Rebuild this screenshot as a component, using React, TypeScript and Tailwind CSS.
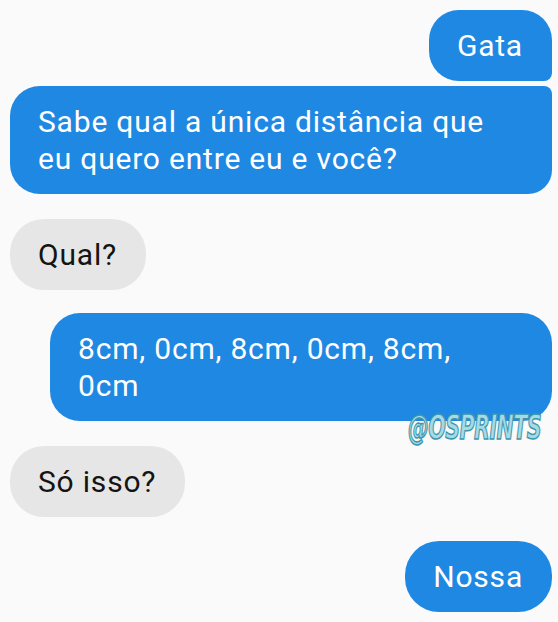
import React from 'react';

type Msg = {
    lines: string[];
    mine: boolean;
    shape: string;
    width?: string;
    gap: string;
};

const messages: Msg[] = [
    { lines: ['Gata'], mine: true, shape: 'rounded-[30px] rounded-br-[8px]', gap: 'mt-0' },
    { lines: ['Sabe qual a única distância que', 'eu quero entre eu e você?'], mine: true, shape: 'rounded-[30px] rounded-tr-[8px] rounded-br-[24px]', width: 'w-[542px]', gap: 'mt-[5px]' },
    { lines: ['Qual?'], mine: false, shape: 'rounded-[34px]', gap: 'mt-[25px]' },
    { lines: ['8cm, 0cm, 8cm, 0cm, 8cm,', '0cm'], mine: true, shape: 'rounded-[30px]', width: 'w-[502px]', gap: 'mt-[23px]' },
    { lines: ['Só isso?'], mine: false, shape: 'rounded-[34px]', gap: 'mt-[25px]' },
    { lines: ['Nossa'], mine: true, shape: 'rounded-[34px]', gap: 'mt-[24px]' },
];

function Bubble({ msg }: { msg: Msg }) {
    const colors = msg.mine ? 'bg-[#1f88e2] text-white' : 'bg-[#e6e6e6] text-[#141414]';
    return (
        <div className={`flex ${msg.mine ? 'justify-end' : 'justify-start'} ${msg.gap}`}>
            <div className={`${colors} ${msg.shape} ${msg.width ?? ''} pl-[28px] pr-[29px] py-[17px] text-[30px] leading-[37px] tracking-[0.8px] whitespace-nowrap`}>
                {msg.lines.map((l, i) => (
                    <div key={i}>{l}</div>
                ))}
            </div>
        </div>
    );
}

export default function App() {
    return (
        <div
            className="w-[558px] h-[622px] bg-[#fafafa] pt-[10px] pl-[10px] pr-[6px] relative overflow-hidden"
            style={{ fontFamily: 'Roboto, "Noto Sans", sans-serif' }}
        >
            {messages.map((m, i) => (
                <Bubble key={i} msg={m} />
            ))}

            {/* watermark */}
            <div
                className="absolute left-[408px] top-[410px] origin-left scale-x-[0.61] text-[34px] font-bold italic tracking-[-1px] text-[#a6dbe6] [-webkit-text-stroke:1.5px_#3d96ac] leading-none whitespace-nowrap"
                style={{ fontFamily: '"DejaVu Sans", sans-serif' }}
            >
                @OSPRINTS
            </div>
        </div>
    );
}
